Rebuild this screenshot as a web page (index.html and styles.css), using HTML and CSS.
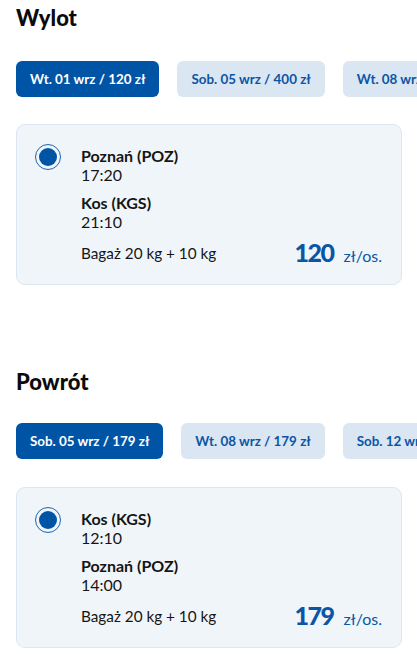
FILE: index.html
```html
<!DOCTYPE html>
<html lang="pl">
<head>
    <meta charset="UTF-8">
    <meta name="viewport" content="width=device-width, initial-scale=1.0">
    <title>Wybór lotu</title>
    <link rel="stylesheet" href="styles.css">
</head>
<body>
    <section class="leg leg-out">
        <h2 class="leg-title">Wylot</h2>
        <div class="date-list">
            <button class="date-btn active">Wt. 01 wrz / 120 zł</button>
            <button class="date-btn">Sob. 05 wrz / 400 zł</button>
            <button class="date-btn">Wt. 08 wrz / 400 zł</button>
        </div>
        <div class="flight-card">
            <span class="radio checked"></span>
            <div class="flight-info">
                <div class="stop">
                    <div class="stop-name">Poznań (POZ)</div>
                    <div class="stop-time">17:20</div>
                </div>
                <div class="stop">
                    <div class="stop-name">Kos (KGS)</div>
                    <div class="stop-time">21:10</div>
                </div>
                <div class="flight-bottom">
                    <span class="baggage">Bagaż 20 kg + 10 kg</span>
                    <span class="price"><b>120</b> zł/os.</span>
                </div>
            </div>
        </div>
    </section>

    <section class="leg leg-back">
        <h2 class="leg-title">Powrót</h2>
        <div class="date-list">
            <button class="date-btn active">Sob. 05 wrz / 179 zł</button>
            <button class="date-btn">Wt. 08 wrz / 179 zł</button>
            <button class="date-btn">Sob. 12 wrz / 179 zł</button>
        </div>
        <div class="flight-card">
            <span class="radio checked"></span>
            <div class="flight-info">
                <div class="stop">
                    <div class="stop-name">Kos (KGS)</div>
                    <div class="stop-time">12:10</div>
                </div>
                <div class="stop">
                    <div class="stop-name">Poznań (POZ)</div>
                    <div class="stop-time">14:00</div>
                </div>
                <div class="flight-bottom">
                    <span class="baggage">Bagaż 20 kg + 10 kg</span>
                    <span class="price"><b>179</b> zł/os.</span>
                </div>
            </div>
        </div>
    </section>
</body>
</html>
```

FILE: styles.css
```css
body {
    font-family: Lato, "Liberation Sans", sans-serif;
    margin: 0;
    padding: 0 0 0 16px;
    color: #151515;
    background: #fff;
    overflow: hidden;
}
.leg {
    padding-top: 6px;
}
.leg-back {
    padding-top: 85px;
}
.leg-title {
    margin: 0;
    font-size: 22px;
    line-height: 24px;
    font-weight: 900;
    color: #0b0b0b;
}
.date-list {
    display: flex;
    gap: 18px;
    margin-top: 31px;
    white-space: nowrap;
}
.leg-back .date-list {
    margin-top: 29px;
}
.date-btn {
    flex-shrink: 0;
    height: 36px;
    padding: 0 14px;
    border: none;
    border-radius: 6px;
    background-color: #dbe6f3;
    color: #0b55a5;
    font-family: Lato, "Liberation Sans", sans-serif;
    font-size: 13.4px;
    font-weight: 700;
}
.date-btn.active {
    background-color: #0054a6;
    color: #fff;
}
.flight-card {
    display: flex;
    width: 348px;
    margin-top: 27px;
    padding: 19px 18px 17px 18px;
    border: 1px solid #dce6f1;
    border-radius: 9px;
    background-color: #f0f5fa;
}
.leg-back .flight-card {
    margin-top: 28px;
}
.radio {
    flex-shrink: 0;
    box-sizing: border-box;
    width: 26px;
    height: 26px;
    border: 1.5px solid #1c64b4;
    border-radius: 50%;
    position: relative;
}
.radio.checked::after {
    content: "";
    position: absolute;
    top: 2.5px;
    left: 2.5px;
    width: 18px;
    height: 18px;
    border-radius: 50%;
    background-color: #0054a6;
}
.flight-info {
    flex: 1;
    margin-left: 20px;
    padding-top: 2px;
    font-size: 16px;
    line-height: 19px;
}
.stop + .stop {
    margin-top: 9px;
}
.stop-name {
    font-weight: 700;
}
.flight-bottom {
    display: flex;
    align-items: center;
    justify-content: space-between;
    margin-top: 6px;
    height: 30px;
}
.baggage {
    font-size: 15.3px;
    padding-top: 2px;
}
.price {
    color: #0b55a5;
    font-size: 16px;
    margin-right: 1px;
}
.price b {
    font-size: 25px;
    line-height: 30px;
    font-weight: 900;
    letter-spacing: -1.5px;
    margin-right: 6px;
}
```
